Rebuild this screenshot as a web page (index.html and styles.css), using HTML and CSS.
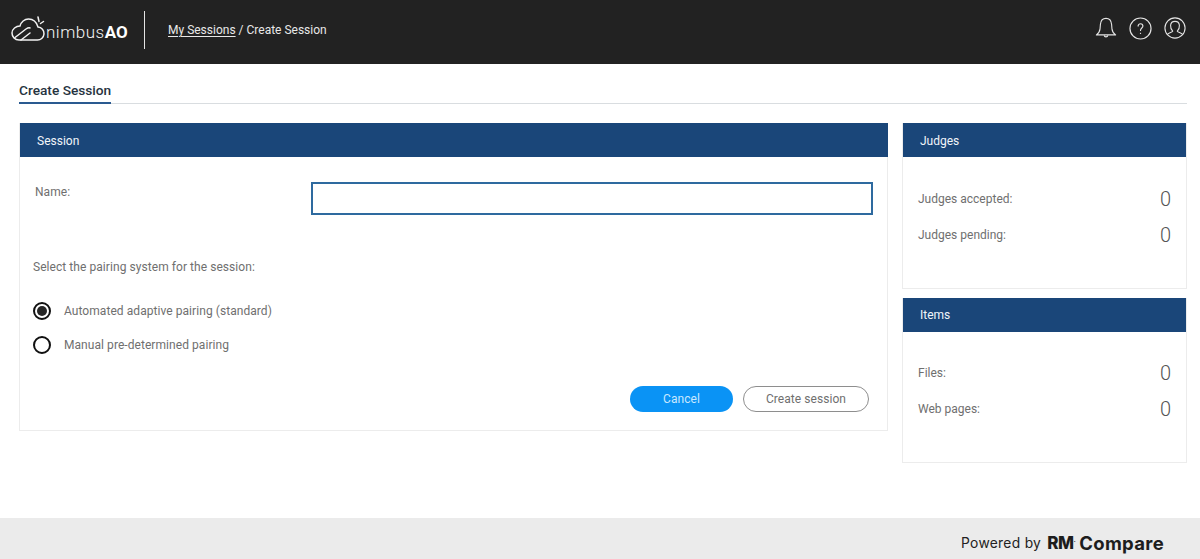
FILE: index.html
```html
<!DOCTYPE html>
<html lang="en">
<head>
<meta charset="utf-8">
<title>Create Session</title>
<link rel="stylesheet" href="styles.css">
</head>
<body>
<header class="topbar">
  <div class="brand">
    <svg class="logo" viewBox="0 0 34 28" width="34" height="28" fill="none" stroke="#f2f2f2" stroke-width="1.500" stroke-linecap="round" stroke-linejoin="round">
      <path d="M8 27h18a6.500 6.500 0 0 0 1-13c-1.500-5-5-8-9.500-8-4 0-7.500 3-8.500 7-4 0-8 3-8 7 0 4 3 7 7 7z"/>
      <path d="M4 24.500l11-8.500c1.500-1 3-1.500 4-1M10 27l9-7"/>
      <path d="M27 4l1 4.500M29.500 10.500l3-2"/>
    </svg>
    <span class="wordmark">nimbus<b>AO</b></span>
  </div>
  <nav class="crumbs"><a class="crumb-link">My Sessions</a> / Create Session</nav>
  <div class="top-icons">
    <svg viewBox="0 0 24 24" width="22" height="22" fill="none" stroke="#e4e4e4" stroke-width="1.200" stroke-linejoin="round">
      <path d="M1.500 19.500c2-1.500 3.700-3 4-6.500l.4-5C6.300 4 8.700 1.500 12 1.500s5.700 2.500 6.100 6.500l.4 5c.3 3.500 2 5 4 6.500z"/>
      <path d="M10 20c.3 2.200 3.700 2.200 4 0"/>
    </svg>
    <svg viewBox="0 0 24 24" width="23" height="23" fill="none" stroke="#e4e4e4" stroke-width="1.200">
      <circle cx="12" cy="12" r="11"/>
      <path d="M9.500 9.500c0-3.300 5-3.300 5 0 0 2-2.500 2-2.500 4.500" stroke-linecap="round"/>
      <path d="M12 16.500v1.200"/>
    </svg>
    <svg viewBox="0 0 24 24" width="22" height="22" fill="none" stroke="#e4e4e4" stroke-width="1.200" stroke-linejoin="round">
      <circle cx="12" cy="12" r="11"/>
      <path d="M3.500 19.500c1-2.500 5-2.500 6-4-2-2-2.500-4-2.300-6.500C7.500 6 9.500 4.800 12 4.800s4.500 1.200 4.800 4.200c.2 2.500-.3 4.500-2.300 6.500 1 1.500 5 1.500 6 4"/>
    </svg>
  </div>
</header>

<main class="page">
  <div class="tabs"><span class="tab">Create Session</span></div>
  <div class="columns">
    <section class="card session">
      <h2 class="card-head">Session</h2>
      <div class="session-body">
        <div class="name-row">
          <label class="name-label" for="name">Name:</label>
          <input class="name-input" id="name" type="text">
        </div>
        <p class="pair-title">Select the pairing system for the session:</p>
        <div class="radio-row"><span class="radio on"></span><span>Automated adaptive pairing (standard)</span></div>
        <div class="radio-row"><span class="radio"></span><span>Manual pre-determined pairing</span></div>
        <div class="actions">
          <button class="btn btn-primary" type="button">Cancel</button>
          <button class="btn btn-outline" type="button">Create session</button>
        </div>
      </div>
    </section>
    <aside class="side">
      <section class="card stat-card">
        <h2 class="card-head">Judges</h2>
        <div class="stats">
          <div class="stat"><span>Judges accepted:</span><span class="num">0</span></div>
          <div class="stat"><span>Judges pending:</span><span class="num">0</span></div>
        </div>
      </section>
      <section class="card stat-card stat-card-low">
        <h2 class="card-head">Items</h2>
        <div class="stats">
          <div class="stat"><span>Files:</span><span class="num">0</span></div>
          <div class="stat"><span>Web pages:</span><span class="num">0</span></div>
        </div>
      </section>
    </aside>
  </div>
</main>

<footer class="footer">
  <span class="powered">Powered by</span>
  <span class="rm">RM<sup class="rm-mark">.</sup></span>
  <span class="compare">Compare</span>
</footer>
</body>
</html>
```
FILE: styles.css
```css
* { box-sizing: border-box; }
html, body { margin: 0; height: 100%; }
body {
  width: 1200px;
  height: 559px;
  overflow: hidden;
  background: #fff;
  font-family: Roboto, "Liberation Sans", sans-serif;
  color: #6f6f6f;
  display: flex;
  flex-direction: column;
}
.topbar {
  height: 64px;
  flex: none;
  background: #222;
  display: flex;
  align-items: center;
  color: #e8e8e8;
  padding-bottom: 4px;
}
.brand {
  width: 145px;
  height: 38px;
  padding-left: 11px;
  border-right: 1px solid #e4e4e4;
  display: flex;
  align-items: center;
}
.logo { flex: none; margin-top: -6px; margin-right: 1px; }
.wordmark {
  font-size: 17px;
  font-weight: 300;
  color: #f4f4f4;
  letter-spacing: .5px;
  margin-top: 3px;
}
.wordmark b { font-weight: 700; letter-spacing: 0; color: #fff; }
.crumbs { margin-left: 23px; font-size: 12px; }
.crumb-link { text-decoration: underline; text-underline-offset: 2px; }
.top-icons {
  margin-left: auto;
  margin-right: 14px;
  display: flex;
  gap: 12px;
  align-items: center;
  margin-top: -4px;
}
.page { flex: 1; padding: 0 13px 0 19px; }
.tabs {
  height: 40px;
  border-bottom: 1px solid #d9dde0;
  display: flex;
  align-items: flex-end;
}
.tab {
  font-size: 13.700px;
  font-weight: 500;
  color: #263340;
  height: 26px;
  line-height: 24px;
  border-bottom: 2px solid #2a5a90;
  margin-bottom: -1px;
}
.columns {
  display: flex;
  gap: 14px;
  margin-top: 19px;
  align-items: flex-start;
}
.card { background: #fff; border: 1px solid #ececec; border-top: 0; }
.session { width: 869px; height: 308px; }
.card-head {
  margin: 0;
  height: 34px;
  background: #1a4679;
  color: #f1f5f9;
  font-size: 12px;
  font-weight: 400;
  line-height: 36px;
  padding-left: 17px;
}
.session .card-head { margin-right: -1px; }
.stat-card-low .card-head { line-height: 34px; }
.session-body { padding: 0 14px 0 13px; font-size: 12px; letter-spacing: .06px; }
.name-row {
  display: flex;
  justify-content: space-between;
  padding-top: 26px;
  height: 70px;
  padding-left: 2px;
}
.name-label { line-height: 18px; }
.name-input {
  width: 562px;
  height: 33px;
  margin-top: -1px;
  border: 2px solid #2e6a9f;
  background: #fff;
  outline: 0;
}
.pair-title { margin: 33px 0 27px; line-height: 15px; }
.radio-row {
  display: flex;
  align-items: center;
  gap: 13px;
  height: 18px;
  margin-bottom: 16px;
}
.radio {
  width: 18px;
  height: 18px;
  border: 2px solid #111;
  border-radius: 50%;
  flex: none;
  display: flex;
  align-items: center;
  justify-content: center;
}
.radio.on::after {
  content: "";
  width: 10px;
  height: 10px;
  border-radius: 50%;
  background: #262626;
}
.actions {
  display: flex;
  justify-content: flex-end;
  gap: 10px;
  margin-top: 32px;
  padding-right: 4px;
}
.btn {
  height: 26px;
  border-radius: 13px;
  font: 400 12px Roboto, "Liberation Sans", sans-serif;
  letter-spacing: .06px;
  padding: 0;
}
.btn-primary { width: 103px; background: #0a93f5; color: #c9e8ff; border: 0; }
.btn-outline { width: 126px; background: #fff; color: #6f6f6f; border: 1px solid #8e8e8e; }
.side { width: 285px; display: flex; flex-direction: column; gap: 9px; }
.stat-card { height: 166px; }
.stat-card-low { height: 165px; }
.stats {
  padding: 30px 15px 0 15px;
  font-size: 12px;
  display: flex;
  flex-direction: column;
  gap: 12px;
}
.stat-card-low .stats { padding-top: 29px; }
.stat {
  display: flex;
  justify-content: space-between;
  align-items: center;
  height: 24px;
}
.num { font-size: 20px; font-weight: 300; color: #555; }
.footer {
  height: 41px;
  flex: none;
  background: #ebebeb;
  display: flex;
  align-items: center;
  justify-content: flex-end;
  padding: 9px 36px 0 0;
  color: #222;
}
.powered { font-size: 13.800px; letter-spacing: .3px; font-family: Inter, Roboto, sans-serif; margin-right: 6px; }
.rm { font-size: 17px; font-weight: 800; font-family: Inter, sans-serif; margin-right: 4px; letter-spacing: -.5px; color: #1d1d1d; }
.rm-mark { font-size: 8px; font-weight: 400; line-height: 0; }
.compare { font-size: 18.500px; font-weight: 700; font-family: Inter, sans-serif; color: #1d1d1d; letter-spacing: .3px; }
```
